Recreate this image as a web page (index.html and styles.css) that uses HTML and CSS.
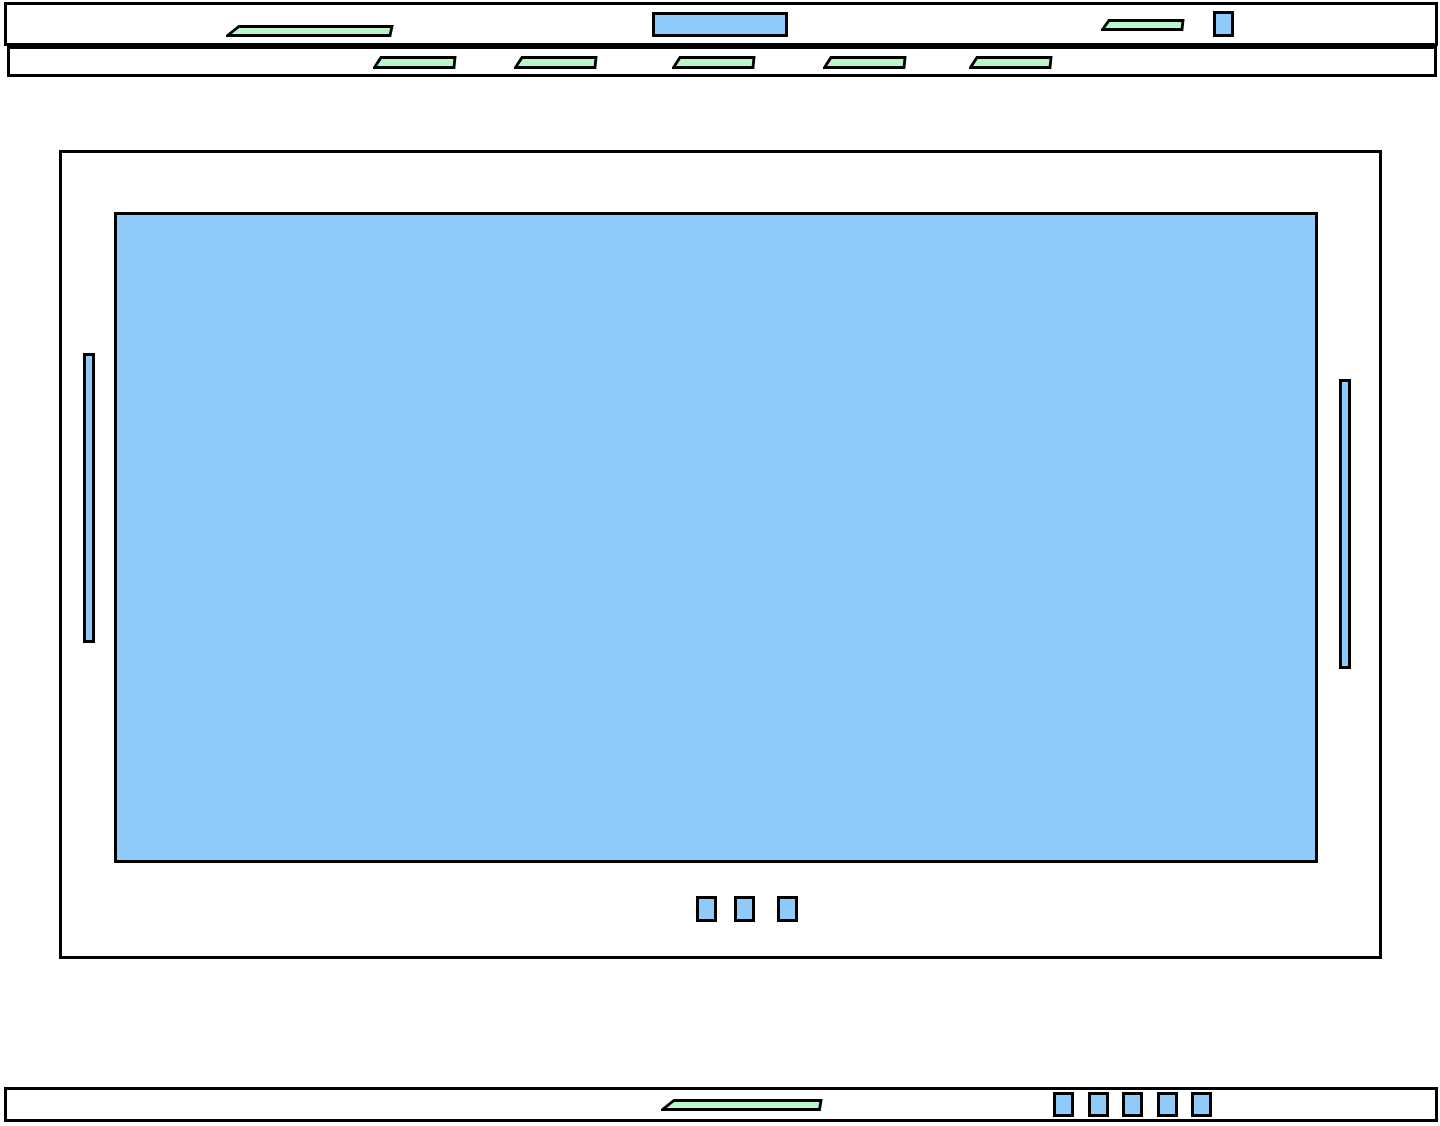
FILE: index.html
```html
<!DOCTYPE html>
<html>
<head>
<meta charset="utf-8">
<link rel="stylesheet" href="styles.css">
</head>
<body>
<header class="topbar">
  <svg class="ph ph-title" width="168" height="12" viewBox="0 0 168 12"><polygon points="13,1.5 166,1.5 164,10.5 1.5,10.5"/></svg>
  <div class="box search"></div>
  <svg class="ph ph-user" width="84" height="12" viewBox="0 0 84 12"><polygon points="8,1.5 82,1.5 81,10.5 1.5,10.5"/></svg>
  <div class="box avatar"></div>
</header>
<nav class="navbar">
  <svg class="ph ph-nav n1" width="84" height="13" viewBox="0 0 84 13"><polygon points="8,1.5 82,1.5 81,11.5 1.5,11.5"/></svg>
  <svg class="ph ph-nav n2" width="84" height="13" viewBox="0 0 84 13"><polygon points="8,1.5 82,1.5 81,11.5 1.5,11.5"/></svg>
  <svg class="ph ph-nav n3" width="84" height="13" viewBox="0 0 84 13"><polygon points="8,1.5 82,1.5 81,11.5 1.5,11.5"/></svg>
  <svg class="ph ph-nav n4" width="84" height="13" viewBox="0 0 84 13"><polygon points="8,1.5 82,1.5 81,11.5 1.5,11.5"/></svg>
  <svg class="ph ph-nav n5" width="84" height="13" viewBox="0 0 84 13"><polygon points="8,1.5 82,1.5 81,11.5 1.5,11.5"/></svg>
</nav>
<main class="carousel">
  <div class="stage">
    <div class="box arrow arrow-left"></div>
    <div class="box slide"></div>
    <div class="box arrow arrow-right"></div>
  </div>
  <div class="dots">
    <div class="box dot"></div>
    <div class="box dot d2"></div>
    <div class="box dot d3"></div>
  </div>
</main>
<footer class="footer">
  <svg class="ph ph-foot" width="162" height="12" viewBox="0 0 162 12"><polygon points="13,1.5 160,1.5 158.5,10.5 1.5,10.5"/></svg>
  <div class="socials">
    <div class="box social"></div>
    <div class="box social"></div>
    <div class="box social"></div>
    <div class="box social"></div>
    <div class="box social"></div>
  </div>
</footer>
</body>
</html>
```
FILE: styles.css
```css
* { box-sizing: border-box; }
html, body { margin: 0; padding: 0; background: #fff; }
body { font-family: "Liberation Sans", Arial, sans-serif; width: 1440px; height: 1126px; overflow: hidden; }

.box { background: #90caf9; border: 3px solid #000; flex: none; }
.ph { display: block; flex: none; }
.ph polygon { fill: #b9f6ca; stroke: #000; stroke-width: 2.8; stroke-linejoin: miter; }

.topbar {
  display: flex;
  align-items: flex-start;
  margin: 2px 0 0 4px;
  width: 1434px;
  height: 44px;
  border: 3px solid #000;
}
.ph-title { margin: 20px 0 0 219px; }
.search { width: 136px; height: 25px; margin: 7px 0 0 258px; }
.ph-user { margin: 14px 0 0 313px; }
.avatar { width: 21px; height: 26px; margin: 6px 0 0 28px; }

.navbar {
  display: flex;
  align-items: flex-start;
  margin: 0 0 0 7px;
  width: 1430px;
  height: 31px;
  border: 3px solid #000;
}
.ph-nav { margin-top: 7px; }
.n1 { margin-left: 363px; }
.n2 { margin-left: 57px; }
.n3 { margin-left: 74px; }
.n4 { margin-left: 67px; }
.n5 { margin-left: 62px; }

.carousel {
  display: flex;
  flex-direction: column;
  margin: 73px 0 0 59px;
  width: 1323px;
  height: 809px;
  border: 3px solid #000;
}
.stage { display: flex; align-items: flex-start; }
.arrow { width: 12px; height: 290px; }
.arrow-left { margin: 200px 0 0 21px; }
.slide { width: 1204px; height: 651px; margin: 59px 0 0 19px; }
.arrow-right { margin: 226px 0 0 21px; }

.dots { display: flex; margin: 33px 0 0 634px; }
.dot { width: 21px; height: 26px; }
.d2 { margin-left: 17px; }
.d3 { margin-left: 22px; }

.footer {
  display: flex;
  align-items: flex-start;
  margin: 128px 0 0 4px;
  width: 1434px;
  height: 35px;
  border: 3px solid #000;
}
.ph-foot { margin: 9px 0 0 654px; }
.socials { display: flex; gap: 13.5px; margin: 2px 0 0 230px; }
.social { width: 21px; height: 25px; }
```
